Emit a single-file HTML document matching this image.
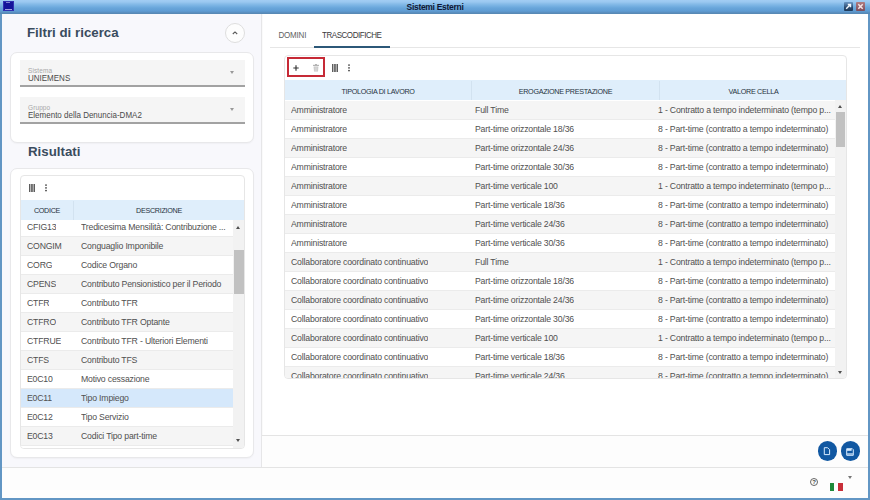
<!DOCTYPE html>
<html><head><meta charset="utf-8">
<style>
*{box-sizing:border-box;margin:0;padding:0}
html,body{width:870px;height:500px;overflow:hidden;background:#6296c4;font-family:"Liberation Sans",sans-serif}
.abs{position:absolute}
#title{left:0;top:0;width:870px;height:14px;background:linear-gradient(#a2cdf3 0px,#9ac8f0 2px,#86bbe8 4px,#76b0e2 6px,#68a5da 8px,#5f9cd3 11px,#5a8fc0 12.5px,#5686b0 14px)}
#title .t{left:0;width:870px;top:2px;text-align:center;font-size:8.5px;font-weight:bold;color:#0e1634;line-height:10px;letter-spacing:-0.3px}
#client{left:2px;top:14px;width:866px;height:484px;background:#fafafa}
#left{left:0;top:0;width:260px;height:453px;background:#f8f8fc;border-right:1px solid #e6e6e8}
h2{position:absolute;font-size:13.3px;font-weight:bold;color:#3a4c5e;line-height:15px}
.card{position:absolute;background:#fff;border:1px solid #e8e8ea;border-radius:7px;box-shadow:0 1px 1.5px rgba(0,0,0,0.035)}
.field{position:absolute;background:#f5f5f5;border-bottom:2px solid #a2a2a2}
.field .lab{position:absolute;left:8px;font-size:6.5px;color:#a8a8a8;letter-spacing:0.1px;line-height:7px}
.field .val{position:absolute;left:8px;font-size:8px;color:#4a4a4a;line-height:9px;letter-spacing:0px;transform:scale(1,1.14);transform-origin:0 7.5px}
.field .arr{position:absolute;right:11px;width:0;height:0;border-left:2.5px solid transparent;border-right:2.5px solid transparent;border-top:3px solid #999}
.tbl{position:absolute;background:#fff;border:1px solid #e6e6e6;border-radius:4px;overflow:hidden}
.hdr{position:absolute;background:#dfeefb;height:20px}
.hdr div{position:absolute;top:1px;height:19px;line-height:21px;text-align:center;font-size:7.2px;font-weight:normal;color:#26323e;letter-spacing:-0.3px;border-right:1px solid #d2e2f0}
.row{position:absolute;height:19px;border-bottom:1px solid #ebebeb;font-size:8.7px;color:#505050;letter-spacing:-0.18px;line-height:18px;white-space:nowrap}
.row.g{background:#f5f5f5}
.row.w{background:#fff}
.row span{position:absolute;top:0;overflow:hidden;text-overflow:ellipsis}
.sb{position:absolute;background:#f2f2f2}
.sb .thumb{position:absolute;left:0;right:0;background:#c1c1c1}
.up{position:absolute;width:0;height:0;border-left:2.7px solid transparent;border-right:2.7px solid transparent;border-bottom:3px solid #505050}
.dn{position:absolute;width:0;height:0;border-left:2.7px solid transparent;border-right:2.7px solid transparent;border-top:3px solid #505050}
</style></head><body>
<div id="title" class="abs">
  <div class="abs" style="left:3px;top:1px;width:11px;height:10px;background:#14149a;border:1px solid #3030b0"></div><div class="abs" style="left:6px;top:2px;width:4px;height:1px;background:#8080d0"></div><div class="abs" style="left:5px;top:9px;width:7px;height:1px;background:#a0a0e0"></div>
  <div class="abs t">Sistemi Esterni</div>
  <div class="abs" style="left:844px;top:2px;width:9px;height:9px;background:linear-gradient(#6a96c4,#2a4a70 60%,#1e3a5a);border-radius:1px"></div>
  <div class="abs" style="left:856px;top:2px;width:9px;height:9px;background:linear-gradient(#b07c80,#7c4c5c);border-radius:1px"></div>
  <svg class="abs" style="left:844px;top:2px" width="9" height="9" viewBox="0 0 9 9"><path d="M2.2 6.8 L6.2 2.8 M3.8 2.5 H6.5 V5.2" stroke="#f4f8fc" stroke-width="1.4" fill="none"/></svg>
  <svg class="abs" style="left:856px;top:2px" width="9" height="9" viewBox="0 0 9 9"><path d="M2.3 2.3 L6.7 6.7 M6.7 2.3 L2.3 6.7" stroke="#f6e4e6" stroke-width="1.5" fill="none"/></svg>
</div>
<div id="client" class="abs">
  <div id="left" class="abs">
    <h2 style="left:25px;top:11px">Filtri di ricerca</h2>
    <div class="abs" style="left:223px;top:8.5px;width:20px;height:20px;border:1px solid #dedede;border-radius:50%;background:#fdfdfd"></div>
    <svg class="abs" style="left:229px;top:15px" width="8" height="8" viewBox="0 0 8 8"><path d="M1.8 5 L4 2.9 L6.2 5" stroke="#5a5a5a" stroke-width="1.1" fill="none"/></svg>

    <div class="card" style="left:8px;top:38px;width:244px;height:91px">
      <div class="field" style="left:9px;top:7px;width:225px;height:27px">
        <div class="lab" style="top:7px">Sistema</div>
        <div class="val" style="top:13.5px">UNIEMENS</div>
        <div class="arr" style="top:11px"></div>
      </div>
      <div class="field" style="left:9px;top:44px;width:225px;height:27px">
        <div class="lab" style="top:7px">Gruppo</div>
        <div class="val" style="top:14px">Elemento della Denuncia-DMA2</div>
        <div class="arr" style="top:11px"></div>
      </div>
    </div>

    <h2 style="left:26px;top:130px">Risultati</h2>

    <div class="card" style="left:8px;top:154px;width:244px;height:290px">
      <div class="tbl" style="left:9px;top:6px;width:225px;height:274px">
        <svg class="abs" style="left:8px;top:8px" width="6" height="8" viewBox="0 0 6 8"><path d="M0.6 0V8M2.3 0V8M3.8 0V8M5.4 0V8" stroke="#555" stroke-width="1.1"/></svg>
        <svg class="abs" style="left:24px;top:8px" width="2" height="8" viewBox="0 0 2 8"><rect x="0.1" y="0.4" width="1.8" height="1.4" fill="#555"/><rect x="0.1" y="3.2" width="1.8" height="1.4" fill="#555"/><rect x="0.1" y="5.9" width="1.8" height="1.4" fill="#555"/></svg>
        <div class="abs" style="left:0;top:44px;width:223px;height:228px;overflow:hidden">
          <div class="abs" style="left:0;top:-2px;width:223px">
          <div class="row w" style="top:0px;width:213px"><span style="left:6px">CFIG13</span><span style="left:60px;width:150px;text-overflow:clip">Tredicesima Mensilità: Contribuzione ...</span></div>
<div class="row g" style="top:19px;width:213px"><span style="left:6px">CONGIM</span><span style="left:60px;width:150px;text-overflow:clip">Conguaglio Imponibile</span></div>
<div class="row w" style="top:38px;width:213px"><span style="left:6px">CORG</span><span style="left:60px;width:150px;text-overflow:clip">Codice Organo</span></div>
<div class="row g" style="top:57px;width:213px"><span style="left:6px">CPENS</span><span style="left:60px;width:150px;text-overflow:clip">Contributo Pensionistico per il Periodo</span></div>
<div class="row w" style="top:76px;width:213px"><span style="left:6px">CTFR</span><span style="left:60px;width:150px;text-overflow:clip">Contributo TFR</span></div>
<div class="row g" style="top:95px;width:213px"><span style="left:6px">CTFRO</span><span style="left:60px;width:150px;text-overflow:clip">Contributo TFR Optante</span></div>
<div class="row w" style="top:114px;width:213px"><span style="left:6px">CTFRUE</span><span style="left:60px;width:150px;text-overflow:clip">Contributo TFR - Ulteriori Elementi</span></div>
<div class="row g" style="top:133px;width:213px"><span style="left:6px">CTFS</span><span style="left:60px;width:150px;text-overflow:clip">Contributo TFS</span></div>
<div class="row w" style="top:152px;width:213px"><span style="left:6px">E0C10</span><span style="left:60px;width:150px;text-overflow:clip">Motivo cessazione</span></div>
<div class="row w" style="top:171px;width:213px;background:#d5e8fb"><span style="left:6px">E0C11</span><span style="left:60px;width:150px;text-overflow:clip">Tipo Impiego</span></div>
<div class="row w" style="top:190px;width:213px"><span style="left:6px">E0C12</span><span style="left:60px;width:150px;text-overflow:clip">Tipo Servizio</span></div>
<div class="row g" style="top:209px;width:213px"><span style="left:6px">E0C13</span><span style="left:60px;width:150px;text-overflow:clip">Codici Tipo part-time</span></div>
<div class="row w" style="top:228px;width:213px"><span style="left:6px">E0C14</span><span style="left:60px;width:150px;text-overflow:clip"></span></div>
          </div>
        </div>
        <div class="hdr" style="left:0;top:24px;width:223px">
          <div style="left:0;width:53px;line-height:19px">CODICE</div>
          <div style="left:53px;width:170px;border-right:none;line-height:19px">DESCRIZIONE</div>
        </div>
        <div class="sb" style="left:212px;top:44px;width:11px;height:228px">
          <div class="up" style="left:2.5px;top:5.5px"></div>
          <div class="thumb" style="top:30px;height:44px;left:1px"></div>
          <div class="dn" style="left:2.5px;top:219px"></div>
        </div>
      </div>
    </div>
  </div>

  <!-- right -->
  <div class="abs" style="left:261px;top:0;width:605px;height:453px;background:#fff">
    <div class="abs" style="left:15.5px;top:17px;font-size:8px;color:#616161;letter-spacing:-0.2px;line-height:9px;transform:scale(1,1.18);transform-origin:0 7px">DOMINI</div>
    <div class="abs" style="left:59px;top:17px;font-size:8px;color:#3a3a3a;letter-spacing:-0.45px;line-height:9px;transform:scale(1,1.18);transform-origin:0 7px">TRASCODIFICHE</div>
    <div class="abs" style="left:7px;top:33px;width:590px;height:1px;background:#e6e6e6"></div>
    <div class="abs" style="left:51px;top:32px;width:76px;height:2px;background:#2c5878"></div>

    <div class="tbl" style="left:21px;top:41px;width:563px;height:324px">
      <div class="abs" style="left:2px;top:1px;width:38px;height:20px;border:2px solid #c62a36"></div>
      <svg class="abs" style="left:8px;top:9px" width="6" height="6" viewBox="0 0 6 6"><path d="M3 0.3V5.7M0.3 3H5.7" stroke="#333" stroke-width="1.15"/></svg>
      <svg class="abs" style="left:28px;top:8px" width="6" height="8" viewBox="0 0 6 8"><rect x="0" y="0.8" width="6" height="1.2" fill="#b4b4b4"/><rect x="2" y="0" width="2" height="1" fill="#b4b4b4"/><path d="M0.6 2.6H5.4L5 7.6H1Z" fill="#c4c4c4"/><path d="M2 3.2V7M3 3.2V7M4 3.2V7" stroke="#e8e8e8" stroke-width="0.5"/></svg>
      <svg class="abs" style="left:47px;top:8px" width="6" height="8" viewBox="0 0 6 8"><path d="M0.6 0V8M2.3 0V8M3.8 0V8M5.4 0V8" stroke="#555" stroke-width="1.1"/></svg>
      <svg class="abs" style="left:63px;top:8px" width="2" height="8" viewBox="0 0 2 8"><rect x="0.1" y="0.4" width="1.8" height="1.4" fill="#555"/><rect x="0.1" y="3.2" width="1.8" height="1.4" fill="#555"/><rect x="0.1" y="5.9" width="1.8" height="1.4" fill="#555"/></svg>
      <div class="hdr" style="left:0;top:24px;width:561px">
        <div style="left:0;width:187px">TIPOLOGIA DI LAVORO</div>
        <div style="left:187px;width:188px">EROGAZIONE PRESTAZIONE</div>
        <div style="left:375px;width:187px;border-right:none">VALORE CELLA</div>
      </div>
      <div class="abs" style="left:0;top:45px;width:551px;height:277px;overflow:hidden">
        <div class="row g" style="top:0px;width:551px;line-height:18px"><span style="left:6px">Amministratore</span><span style="left:190px">Full Time</span><span style="left:373px;width:174px;text-overflow:clip">1 - Contratto a tempo indeterminato (tempo p...</span></div>
<div class="row w" style="top:19px;width:551px;line-height:18px"><span style="left:6px">Amministratore</span><span style="left:190px">Part-time orizzontale 18/36</span><span style="left:373px;width:174px;text-overflow:clip">8 - Part-time (contratto a tempo indeterminato)</span></div>
<div class="row g" style="top:38px;width:551px;line-height:18px"><span style="left:6px">Amministratore</span><span style="left:190px">Part-time orizzontale 24/36</span><span style="left:373px;width:174px;text-overflow:clip">8 - Part-time (contratto a tempo indeterminato)</span></div>
<div class="row w" style="top:57px;width:551px;line-height:18px"><span style="left:6px">Amministratore</span><span style="left:190px">Part-time orizzontale 30/36</span><span style="left:373px;width:174px;text-overflow:clip">8 - Part-time (contratto a tempo indeterminato)</span></div>
<div class="row g" style="top:76px;width:551px;line-height:18px"><span style="left:6px">Amministratore</span><span style="left:190px">Part-time verticale 100</span><span style="left:373px;width:174px;text-overflow:clip">1 - Contratto a tempo indeterminato (tempo p...</span></div>
<div class="row w" style="top:95px;width:551px;line-height:18px"><span style="left:6px">Amministratore</span><span style="left:190px">Part-time verticale 18/36</span><span style="left:373px;width:174px;text-overflow:clip">8 - Part-time (contratto a tempo indeterminato)</span></div>
<div class="row g" style="top:114px;width:551px;line-height:18px"><span style="left:6px">Amministratore</span><span style="left:190px">Part-time verticale 24/36</span><span style="left:373px;width:174px;text-overflow:clip">8 - Part-time (contratto a tempo indeterminato)</span></div>
<div class="row w" style="top:133px;width:551px;line-height:18px"><span style="left:6px">Amministratore</span><span style="left:190px">Part-time verticale 30/36</span><span style="left:373px;width:174px;text-overflow:clip">8 - Part-time (contratto a tempo indeterminato)</span></div>
<div class="row g" style="top:152px;width:551px;line-height:18px"><span style="left:6px">Collaboratore coordinato continuativo</span><span style="left:190px">Full Time</span><span style="left:373px;width:174px;text-overflow:clip">1 - Contratto a tempo indeterminato (tempo p...</span></div>
<div class="row w" style="top:171px;width:551px;line-height:18px"><span style="left:6px">Collaboratore coordinato continuativo</span><span style="left:190px">Part-time orizzontale 18/36</span><span style="left:373px;width:174px;text-overflow:clip">8 - Part-time (contratto a tempo indeterminato)</span></div>
<div class="row g" style="top:190px;width:551px;line-height:18px"><span style="left:6px">Collaboratore coordinato continuativo</span><span style="left:190px">Part-time orizzontale 24/36</span><span style="left:373px;width:174px;text-overflow:clip">8 - Part-time (contratto a tempo indeterminato)</span></div>
<div class="row w" style="top:209px;width:551px;line-height:18px"><span style="left:6px">Collaboratore coordinato continuativo</span><span style="left:190px">Part-time orizzontale 30/36</span><span style="left:373px;width:174px;text-overflow:clip">8 - Part-time (contratto a tempo indeterminato)</span></div>
<div class="row g" style="top:228px;width:551px;line-height:18px"><span style="left:6px">Collaboratore coordinato continuativo</span><span style="left:190px">Part-time verticale 100</span><span style="left:373px;width:174px;text-overflow:clip">1 - Contratto a tempo indeterminato (tempo p...</span></div>
<div class="row w" style="top:247px;width:551px;line-height:18px"><span style="left:6px">Collaboratore coordinato continuativo</span><span style="left:190px">Part-time verticale 18/36</span><span style="left:373px;width:174px;text-overflow:clip">8 - Part-time (contratto a tempo indeterminato)</span></div>
<div class="row g" style="top:266px;width:551px;line-height:18px"><span style="left:6px">Collaboratore coordinato continuativo</span><span style="left:190px">Part-time verticale 24/36</span><span style="left:373px;width:174px;text-overflow:clip">8 - Part-time (contratto a tempo indeterminato)</span></div>
<div class="row w" style="top:285px;width:551px;line-height:18px"><span style="left:6px">Collaboratore coordinato continuativo</span><span style="left:190px">Part-time verticale 30/36</span><span style="left:373px;width:174px;text-overflow:clip">8 - Part-time (contratto a tempo indeterminato)</span></div>
      </div>
      <div class="sb" style="left:550px;top:44px;width:11px;height:278px">
        <div class="up" style="left:2.5px;top:5px"></div>
        <div class="thumb" style="top:11.5px;height:35.5px;left:1px;right:1px"></div>
        <div class="dn" style="left:2.5px;top:271px"></div>
      </div>
    </div>
  </div>

  <!-- footer -->
  <div class="abs" style="left:260px;top:421px;width:606px;height:1px;background:#e4e4e4"></div>
  <div class="abs" style="left:260px;top:422px;width:606px;height:31px;background:#fdfdfd"></div>
  <div class="abs" style="left:815.5px;top:427.2px;width:19.7px;height:19.7px;border-radius:50%;background:#1158a2"></div>
  <div class="abs" style="left:838.6px;top:427.2px;width:19.7px;height:19.7px;border-radius:50%;background:#1158a2"></div>
  <svg class="abs" style="left:821px;top:433px" width="8" height="9" viewBox="0 0 8 9"><path d="M1.3 0.7H4.6L6.6 2.7V7.6H1.3Z" stroke="#d8ecff" stroke-width="1" fill="none"/></svg>
  <svg class="abs" style="left:843.5px;top:433.5px" width="8" height="8" viewBox="0 0 8 8"><path d="M0.7 0.7H6.3L7.3 1.7V7.3H0.7Z" stroke="#d8ecff" stroke-width="1" fill="none"/><rect x="1" y="1" width="4.6" height="1.8" fill="#d8ecff"/><rect x="1" y="5.2" width="6" height="1.6" fill="#a8c8e8"/></svg>

  <div class="abs" style="left:0;top:453px;width:866px;height:1px;background:#e4e4e4"></div>
  <div class="abs" style="left:0;top:454px;width:866px;height:30px;background:#fdfdfd"></div>
  <div class="abs" style="left:808px;top:464px;width:8px;height:8px;border:1px solid #666;border-radius:50%;font-size:6px;line-height:6px;text-align:center;color:#444;font-weight:bold">?</div>
  <div class="abs" style="left:828px;top:469px;width:4px;height:8px;background:#1f8a3a"></div>
  <div class="abs" style="left:832px;top:469px;width:4px;height:8px;background:#fff"></div>
  <div class="abs" style="left:836px;top:469px;width:5px;height:8px;background:#c8303a"></div>
  <div class="abs" style="left:846px;top:462px;width:0;height:0;border-left:2.5px solid transparent;border-right:2.5px solid transparent;border-top:3px solid #777"></div>
</div>
</body></html>
